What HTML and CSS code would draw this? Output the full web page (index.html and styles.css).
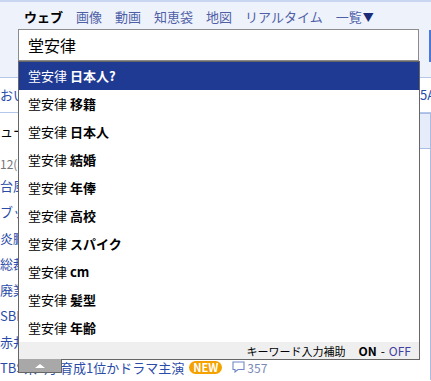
FILE: index.html
```html
<!DOCTYPE html>
<html lang="ja">

<head>
    <meta charset="UTF-8">
    <meta name="viewport" content="width=device-width, initial-scale=1.0">
    <title>Yahoo! JAPAN</title>
    <link rel="stylesheet" href="styles.css">
</head>

<body>
    <div id="page">
        <div id="masthead">
            <ul class="tabs">
                <li class="tab current">ウェブ</li>
                <li class="tab">画像</li>
                <li class="tab">動画</li>
                <li class="tab">知恵袋</li>
                <li class="tab">地図</li>
                <li class="tab">リアルタイム</li>
                <li class="tab">一覧<span class="arrow">▼</span></li>
            </ul>
            <div class="search">
                <input class="query" type="text" value="堂安律">
                <span class="search-btn"></span>
            </div>
        </div>
        <div class="pickup">
            <a class="pickup-main" href="#">おいしい</a>
            <a class="pickup-side" href="#">5A</a>
        </div>
        <div class="board">
            <div class="board-main">
                <div class="board-tabs">
                    <span class="board-title">ニュース</span>
                    <span class="board-tab"></span>
                </div>
                <div class="date">12(木)</div>
                <ul class="topics">
                    <li><a href="#">台風</a></li>
                    <li><a href="#">ブッ</a></li>
                    <li><a href="#">炎鵬</a></li>
                    <li><a href="#">総裁</a></li>
                    <li><a href="#">廃業</a></li>
                    <li><a href="#">SBI</a></li>
                    <li><a href="#">赤井</a></li>
                    <li><a href="#">TBS系7月 育成1位かドラマ主演</a><span class="new">NEW</span><span class="comments"><svg width="13" height="12" viewBox="0 0 13 12"><path d="M1 1h11v7.5H6L3 11V8.5H1z" fill="none" stroke="#6f86c6" stroke-width="1.1"/></svg>357</span></li>
                </ul>
            </div>
            <div class="board-side"></div>
        </div>

        <!-- keyword suggest dropdown -->
        <div class="suggest">
            <ul class="suggest-list">
                <li class="active">堂安律 <b>日本人?</b></li>
                <li>堂安律 <b>移籍</b></li>
                <li>堂安律 <b>日本人</b></li>
                <li>堂安律 <b>結婚</b></li>
                <li>堂安律 <b>年俸</b></li>
                <li>堂安律 <b>高校</b></li>
                <li>堂安律 <b>スパイク</b></li>
                <li>堂安律 <b>cm</b></li>
                <li>堂安律 <b>髪型</b></li>
                <li>堂安律 <b>年齢</b></li>
            </ul>
            <div class="suggest-foot">キーワード入力補助<b class="on">ON</b><span class="dash">-</span><a class="off" href="#">OFF</a></div>
            <span class="suggest-close"></span>
        </div>
    </div>
</body>

</html>
```

FILE: styles.css
```css
* {
    margin: 0;
    padding: 0;
    box-sizing: border-box;
}

body {
    font-family: "Noto Sans CJK JP", "Noto Sans", sans-serif;
    font-size: 13px;
    color: #000;
    background: #fff;
    width: 431px;
    height: 381px;
    overflow: hidden;
}

#page {
    position: relative;
}

ul {
    list-style: none;
}

a {
    color: #2b4ba8;
    text-decoration: none;
}

/* header */
#masthead {
    height: 78px;
    background: #eef2fb;
    border-top: 2px solid #c9d6f1;
    border-bottom: 1px solid #b4c6ea;
}

.tabs {
    display: flex;
    gap: 13px;
    height: 27px;
    padding: 5px 0 0 24px;
    line-height: 20px;
}

.tab {
    color: #4f5fa6;
}

.tab.current {
    color: #000;
    font-weight: bold;
}

.arrow {
    font-size: 11px;
    color: #1c2b78;
    margin-left: 1px;
}

.search {
    display: flex;
}

.query {
    margin-left: 18px;
    width: 402px;
    height: 32px;
    padding-left: 9px;
    border: 1px solid #8c8c8c;
    background: #fff;
    color: #000;
    font: 16px "Noto Sans CJK JP", sans-serif;
    outline: none;
}

.search-btn {
    flex: 1;
    height: 32px;
    margin: 1px 0 0 10px;
    border-left: 2px solid #4a78d8;
}

/* content behind the dropdown */
.pickup {
    display: flex;
    height: 35px;
    line-height: 34px;
    border-bottom: 1px solid #b4c6ea;
    white-space: nowrap;
}

.pickup-main {
    width: 420px;
}

.pickup-side {
    flex: 1;
    overflow: hidden;
}

.board {
    display: flex;
}

.board-main {
    width: 430px;
}

.board-side {
    flex: 1;
    border-left: 1px solid #a8bce4;
}

.board-tabs {
    display: flex;
    height: 36px;
    line-height: 36px;
}

.board-title {
    margin-left: -13px;
}

.board-tab {
    margin-left: auto;
    width: 11px;
    background: #e6ecfa;
    border: 1px solid #a8bce4;
    border-right: none;
}

.date {
    height: 23px;
    padding-top: 7px;
    line-height: 16px;
    font-size: 12px;
    color: #777;
}

.topics li {
    display: flex;
    align-items: center;
    height: 26px;
    white-space: nowrap;
}

.new {
    margin-left: 5px;
    padding: 0 4px;
    height: 13px;
    line-height: 13px;
    border-radius: 7px;
    background: #f5a200;
    color: #fff;
    font-size: 11px;
    font-weight: bold;
}

.comments {
    display: flex;
    align-items: center;
    gap: 2px;
    margin-left: 10px;
    font-size: 12px;
    color: #7a88b8;
}

/* keyword suggest */
.suggest {
    position: absolute;
    top: 61px;
    left: 18px;
    width: 402px;
    background: #fff;
    border: 1px solid #666;
}

.suggest-list li {
    height: 28px;
    line-height: 28px;
    padding-left: 9px;
}

.suggest-list li.active {
    background: #1f3a93;
    color: #fff;
}

.suggest-foot {
    height: 17px;
    line-height: 17px;
    padding-right: 8px;
    background: #efefef;
    font-size: 11px;
    text-align: right;
}

.on {
    margin-left: 13px;
    font-size: 12px;
}

.dash {
    margin: 0 4px;
    font-size: 12px;
}

.off {
    color: #4040a0;
    font-size: 12px;
}

.suggest-close {
    position: absolute;
    top: 100%;
    left: -1px;
    width: 44px;
    height: 14px;
    display: flex;
    justify-content: center;
    align-items: center;
    background: #a8a8a8;
    border: 1px solid #666;
    border-top: none;
}

.suggest-close::before {
    content: "";
    border-left: 5px solid transparent;
    border-right: 5px solid transparent;
    border-bottom: 4px solid #fff;
}
```
